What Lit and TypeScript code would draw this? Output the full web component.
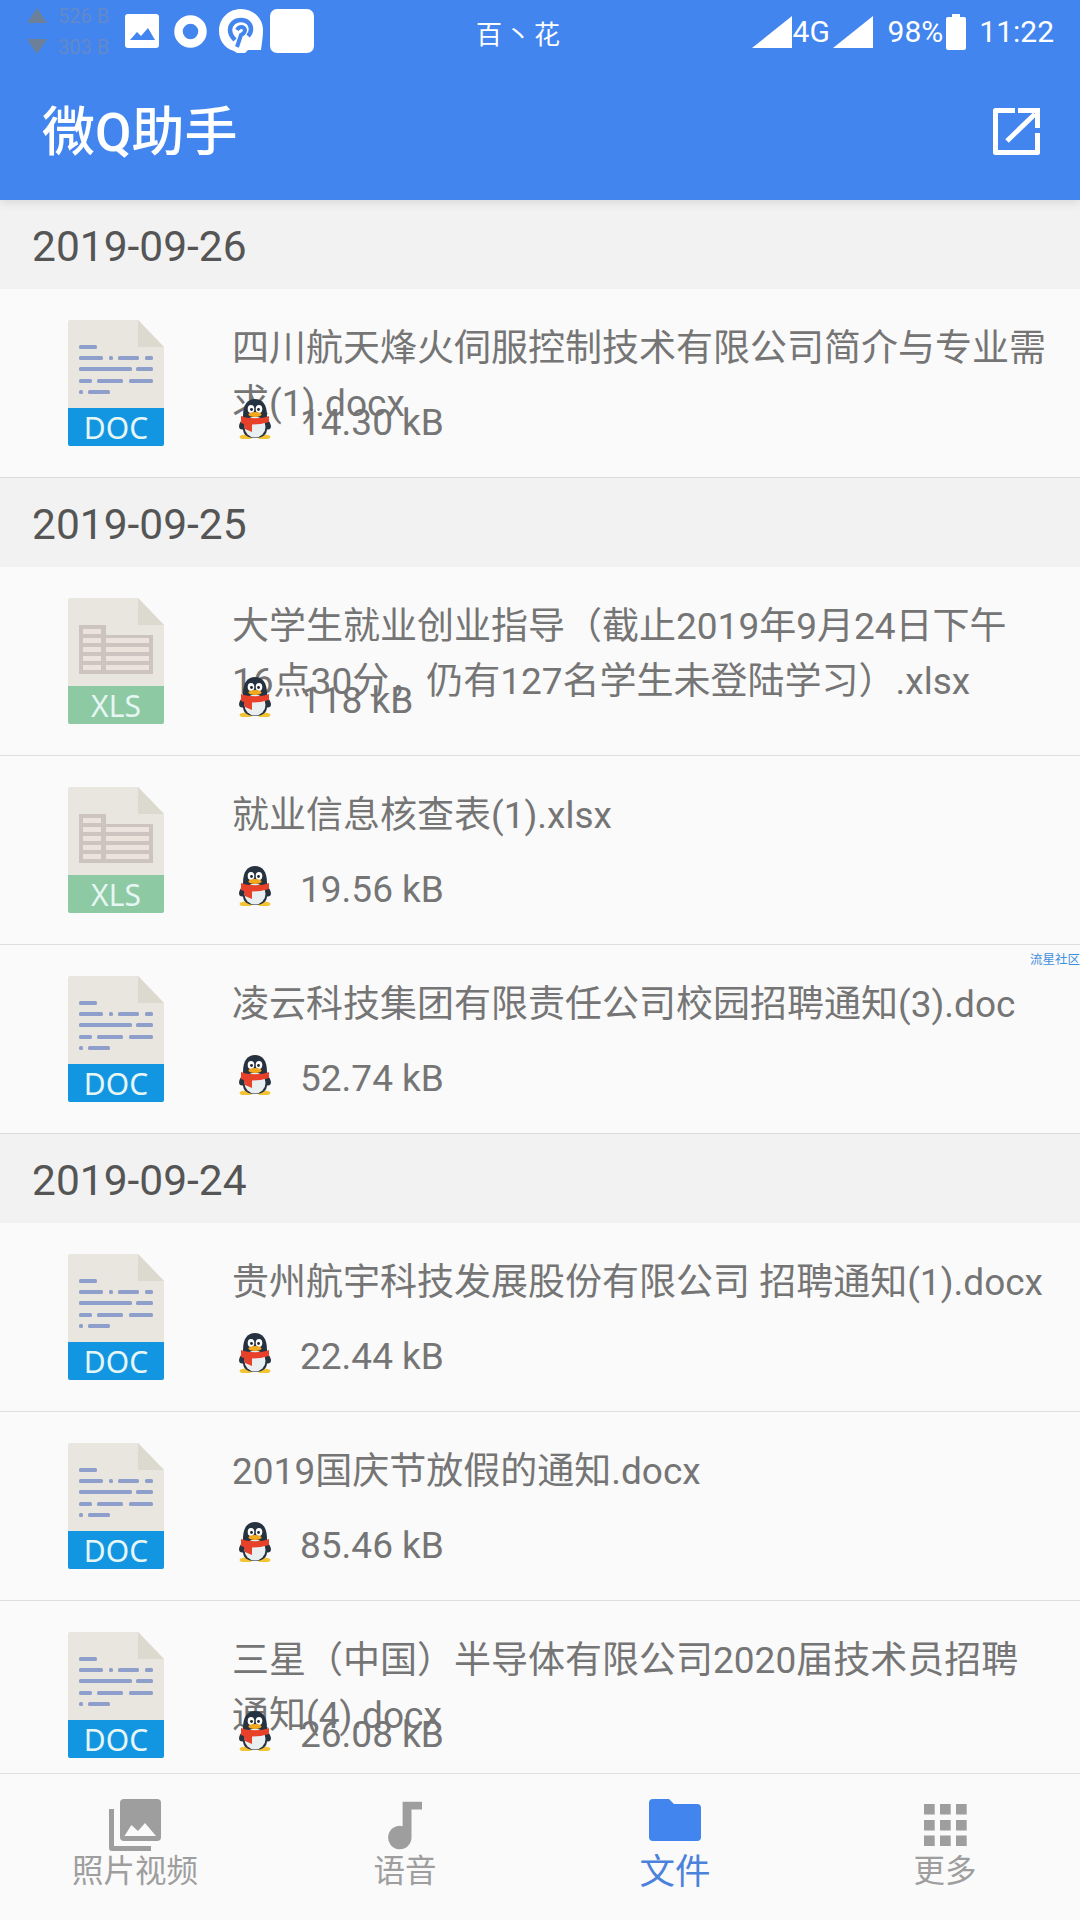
import { LitElement, html, css, svg } from "lit";
import { customElement } from "lit/decorators.js";

type Row = { kind: "doc" | "xls"; lines: string[]; size: string; mark?: boolean };
type Group = { date: string; rows: Row[] };

const groups: Group[] = [
  { date: "2019-09-26", rows: [
    { kind: "doc", lines: ["四川航天烽火伺服控制技术有限公司简介与专业需", "求(1).docx"], size: "14.30 kB" },
  ]},
  { date: "2019-09-25", rows: [
    { kind: "xls", lines: ["大学生就业创业指导（截止2019年9月24日下午", "16点30分，仍有127名学生未登陆学习）.xlsx"], size: "118 kB" },
    { kind: "xls", lines: ["就业信息核查表(1).xlsx"], size: "19.56 kB" },
    { kind: "doc", lines: ["凌云科技集团有限责任公司校园招聘通知(3).doc"], size: "52.74 kB", mark: true },
  ]},
  { date: "2019-09-24", rows: [
    { kind: "doc", lines: ["贵州航宇科技发展股份有限公司 招聘通知(1).docx"], size: "22.44 kB" },
    { kind: "doc", lines: ["2019国庆节放假的通知.docx"], size: "85.46 kB" },
    { kind: "doc", lines: ["三星（中国）半导体有限公司2020届技术员招聘", "通知(4).docx"], size: "26.08 kB" },
  ]},
];

const docLines: number[][] = [
  [27, 11, 29],
  [38, 11, 35], [38, 41, 45], [38, 50, 71], [38, 77, 85],
  [49, 11, 64], [49, 68, 85],
  [61, 11, 24], [61, 29, 55], [61, 61, 85],
  [72, 11, 15], [72, 20, 42],
];

const xlsCells: number[][] = [
  [15, 31, 18, 5],
  [15, 40, 18, 5], [38, 40, 43, 5],
  [15, 49, 18, 5], [38, 49, 43, 5],
  [15, 58, 18, 5], [38, 58, 43, 5],
  [15, 67, 18, 5], [38, 67, 43, 5],
];

function fileIcon(kind: "doc" | "xls") {
  const band = kind === "doc" ? "#1296e2" : "#8dc9a2";
  const label = kind === "doc" ? "DOC" : "XLS";
  return html`<div class="file">
    <svg viewBox="0 0 96 126" width="96" height="126">
      <path d="M2 0H70L96 27V124a2 2 0 0 1-2 2H2a2 2 0 0 1-2-2V2a2 2 0 0 1 2-2Z" fill="#e8e6df"/>
      <path d="M70 0L96 27H70Z" fill="#dcdacf"/>
      ${kind === "doc"
        ? docLines.map(([y, a, b]) => svg`<rect x=${a} y=${y - 2} width=${b - a} height="4" rx="1.5" fill="#8f9fcb"/>`)
        : svg`<path d="M11 27H38V37H85V76H11Z" fill="#cdc4bf"/>
            ${xlsCells.map(([x, y, w, h]) => svg`<rect x=${x} y=${y} width=${w} height=${h} fill="#ebe3dc"/>`)}`}
      <path d="M0 88H96V124a2 2 0 0 1-2 2H2a2 2 0 0 1-2-2Z" fill=${band}/>
    </svg>
    <span class="kind">${label}</span>
  </div>`;
}

const penguin = html`<svg class="qq" viewBox="0 0 34 40" width="34" height="40">
  <ellipse cx="8" cy="38" rx="6.500" ry="2.400" fill="#f3c334"/>
  <ellipse cx="26" cy="38" rx="6.500" ry="2.400" fill="#f3c334"/>
  <path d="M1 27C2 22 5 20 7 18L7 30C4 31 1 31 1 27ZM33 27C32 22 29 20 27 18L27 30C30 31 33 31 33 27Z" fill="#26323f"/>
  <path d="M5 17C5 5 10 0 17 0S29 5 29 17V30C29 36 24 39 17 39S5 36 5 30Z" fill="#26323f"/>
  <ellipse cx="17" cy="28" rx="10.500" ry="10.500" fill="#e9eef0"/>
  <ellipse cx="13" cy="10" rx="3.300" ry="4" fill="#fff"/>
  <ellipse cx="21" cy="10" rx="3.300" ry="4" fill="#fff"/>
  <circle cx="13.500" cy="10.500" r="1.400" fill="#1c2530"/>
  <circle cx="20.500" cy="10.500" r="1.400" fill="#1c2530"/>
  <path d="M3 17C10 20 24 20 31 17L31 23C25 24.500 23 25 22 25L14 25.500L14 33L7 30L6 25L3 24Z" fill="#e8412a"/>
  <ellipse cx="17" cy="15.500" rx="6.500" ry="2.600" fill="#f3a81e"/>
</svg>`;

@customElement("app-root")
export class AppRoot extends LitElement {
  static styles = css`
    :host {
      display: flex;
      flex-direction: column;
      width: 1080px;
      height: 1920px;
      overflow: hidden;
      background: #fafafa;
      font-family: Roboto, "Noto Sans CJK SC", sans-serif;
    }
    .head {
      position: relative;
      z-index: 2;
      flex: none;
      height: 200px;
      background: #4285ef;
      color: #fff;
      box-shadow: 0 2px 10px rgba(0, 0, 0, 0.12);
    }
    .status {
      display: flex;
      height: 62px;
    }
    .left {
      display: flex;
      width: 476px;
      padding-left: 27px;
      box-sizing: border-box;
    }
    .net {
      display: grid;
      grid-template-columns: 31px 67px;
      grid-auto-rows: 31px;
      align-items: center;
      font-size: 20px;
      color: #6389c9;
      height: 62px;
    }
    .sicons {
      display: flex;
      align-items: flex-start;
      padding-top: 9px;
    }
    .pic { margin: 5px 15px 0 0; }
    .ring { margin: 6px 12px 0 0; }
    .aperture { margin-right: 7px; }
    .blank {
      width: 44px;
      height: 44px;
      border-radius: 7px;
      background: #fff;
    }
    .carrier {
      font-size: 26px;
      letter-spacing: 3px;
      line-height: 70px;
      height: 62px;
      white-space: nowrap;
    }
    .right {
      display: flex;
      align-items: flex-start;
      margin-left: auto;
      padding: 16px 26px 0 0;
      font-size: 30px;
      line-height: 32px;
    }
    .four-g { width: 41px; padding-left: 1px; box-sizing: border-box; }
    .pct { margin: 0 3px 0 15px; }
    .bat { margin: -2px 13px 0 0; }
    .bar {
      display: flex;
      align-items: center;
      justify-content: space-between;
      height: 138px;
      padding: 0 40px 0 42px;
    }
    .app-title {
      font-size: 53px;
      font-weight: 500;
      line-height: 70px;
      padding-top: 4px;
      white-space: nowrap;
    }
    .list {
      flex: 1;
      min-height: 0;
      overflow: hidden;
    }
    .date {
      height: 89px;
      padding-left: 32px;
      background: #f2f2f2;
      color: #555;
      font-size: 42.500px;
      line-height: 93px;
    }
    .row {
      position: relative;
      display: flex;
      box-sizing: border-box;
      height: 189px;
      padding: 31px 0 0 68px;
      border-bottom: 1px solid #ddd;
      color: #757575;
    }
    .file {
      position: relative;
      flex: none;
      width: 96px;
      height: 126px;
      margin-right: 68px;
    }
    .file svg { display: block; }
    .kind {
      position: absolute;
      left: 0;
      right: 0;
      bottom: 0;
      height: 38px;
      text-align: center;
      font-family: "Noto Sans", sans-serif;
      font-size: 30px;
      line-height: 40px;
      color: #e6f6f4;
    }
    .info { min-width: 0; padding-top: 1px; }
    .name {
      height: 55px;
      font-size: 37px;
      line-height: 55px;
      white-space: nowrap;
    }
    .meta {
      display: flex;
      align-items: flex-start;
      margin: 23px 0 0 6px;
    }
    .qq { flex: none; margin-right: 28px; }
    .size {
      font-size: 37px;
      line-height: 47px;
      white-space: nowrap;
    }
    .mark {
      position: absolute;
      top: 7px;
      right: 0;
      font-size: 12.500px;
      line-height: 16px;
      color: #3f8fdc;
    }
    .tabs {
      flex: none;
      display: grid;
      grid-template-columns: repeat(4, 1fr);
      box-sizing: border-box;
      height: 147px;
      padding-top: 25px;
      border-top: 1px solid #e0e0e0;
      background: #fafafa;
      color: #9e9e9e;
      font-size: 31.500px;
    }
    .tab {
      display: flex;
      flex-direction: column;
      align-items: center;
    }
    .tab-icon { height: 53px; display: block; }
    .tab-label { line-height: 40px; white-space: nowrap; }
    .on { color: #4a82dc; font-size: 35.500px; }
  `;

  render() {
    return html`
      <div class="head">
        <div class="status">
          <div class="left">
            <div class="net">
              <svg viewBox="0 0 20 15" width="20" height="15"><path d="M10 0L20 15H0Z" fill="#6d8099"/></svg>
              <span>526 B</span>
              <svg viewBox="0 0 20 15" width="20" height="15"><path d="M0 0H20L10 15Z" fill="#6d8099"/></svg>
              <span>303 B</span>
            </div>
            <div class="sicons">
              <svg class="pic" viewBox="0 0 34 34" width="34" height="34">
                <rect width="34" height="34" rx="3" fill="#fff"/>
                <path d="M5 26L12 18L16 22L23 14L30 26Z" fill="#4285ef"/>
              </svg>
              <svg class="ring" viewBox="0 0 33 33" width="33" height="33">
                <circle cx="16.500" cy="16.500" r="12" fill="none" stroke="#fff" stroke-width="8.500"/>
              </svg>
              <svg class="aperture" viewBox="0 0 44 44" width="44" height="44">
                <path d="M22 0C34 0 44 9 44 21C44 27 43 33 42 41L29 41L26 44L18 44L15 42C5 39 0 31 0 22C0 9 10 0 22 0Z" fill="#fff"/>
                <path d="M16 31C12 27 11 24 11 21C11 15 16 11 22 11C28 11 32 15 32 20C32 23 31 25 29 27" fill="none" stroke="#4285ef" stroke-width="4.500"/>
                <path d="M18 21C20 17 25 17 26 21C26 24 24 25 22 26L18 38" fill="none" stroke="#4285ef" stroke-width="4"/>
              </svg>
              <div class="blank"></div>
            </div>
          </div>
          <div class="carrier">百丶花</div>
          <div class="right">
            <svg viewBox="0 0 40 32" width="40" height="32"><path d="M40 0V32H0Z" fill="#fff"/></svg>
            <span class="four-g">4G</span>
            <svg viewBox="0 0 40 32" width="40" height="32"><path d="M40 0V32H0Z" fill="#fff"/></svg>
            <span class="pct">98%</span>
            <svg class="bat" viewBox="0 0 20 36" width="20" height="36">
              <path d="M6 0H14V3H18a2 2 0 0 1 2 2V34a2 2 0 0 1-2 2H2a2 2 0 0 1-2-2V5a2 2 0 0 1 2-2H6Z" fill="#fff"/>
            </svg>
            <span>11:22</span>
          </div>
        </div>
        <div class="bar">
          <div class="app-title">微Q助手</div>
          <svg viewBox="0 0 47 47" width="47" height="47">
            <path d="M22 2.500H2.500V44.500H44.500V25" fill="none" stroke="#fff" stroke-width="5" stroke-linejoin="round"/>
            <path d="M14 33L42 6" fill="none" stroke="#fff" stroke-width="5"/>
            <path d="M25 0H47V20H42V5H25Z" fill="#fff"/>
          </svg>
        </div>
      </div>
      <div class="list">
        ${groups.map(g => html`
          <div class="date">${g.date}</div>
          ${g.rows.map(r => html`
            <div class="row">
              ${fileIcon(r.kind)}
              <div class="info">
                <div class="name">${r.lines.map((l, i) => html`${i ? html`<br>` : ""}${l}`)}</div>
                <div class="meta">${penguin}<span class="size">${r.size}</span></div>
              </div>
              ${r.mark ? html`<span class="mark">流星社区</span>` : ""}
            </div>
          `)}
        `)}
      </div>
      <div class="tabs">
        <div class="tab">
          <svg class="tab-icon" viewBox="0 0 52 53" width="52">
            <path d="M0 10H5V47H42V52H3a3 3 0 0 1-3-3Z" fill="#9e9e9e"/>
            <rect x="11" y="0" width="41" height="42" rx="4" fill="#9e9e9e"/>
            <path d="M15.500 37L22.400 26L29 32L36 24L47 37Z" fill="#fafafa"/>
          </svg>
          <span class="tab-label">照片视频</span>
        </div>
        <div class="tab">
          <svg class="tab-icon" viewBox="0 0 34 53" width="34">
            <path d="M14.600 2.700H34V10.500H23.500V38.300A11.700 11.700 0 1 1 14.600 27.200Z" fill="#9e9e9e"/>
          </svg>
          <span class="tab-label">语音</span>
        </div>
        <div class="tab on">
          <svg class="tab-icon" viewBox="0 0 52 53" width="52">
            <path d="M4 0H20L25 5H48a4 4 0 0 1 4 4V38a4 4 0 0 1-4 4H4a4 4 0 0 1-4-4V4a4 4 0 0 1 4-4Z" fill="#4285ef"/>
          </svg>
          <span class="tab-label">文件</span>
        </div>
        <div class="tab">
          <svg class="tab-icon" viewBox="0 0 43 53" width="43">
            <path fill="#9e9e9e" d="M0 5h10.700v10.500H0ZM16 5h10.700v10.500H16ZM32 5h10.700v10.500H32ZM0 21h10.700v10.500H0ZM16 21h10.700v10.500H16ZM32 21h10.700v10.500H32ZM0 36.500h10.700v10.500H0ZM16 36.500h10.700v10.500H16ZM32 36.500h10.700v10.500H32Z"/>
          </svg>
          <span class="tab-label">更多</span>
        </div>
      </div>
    `;
  }
}
